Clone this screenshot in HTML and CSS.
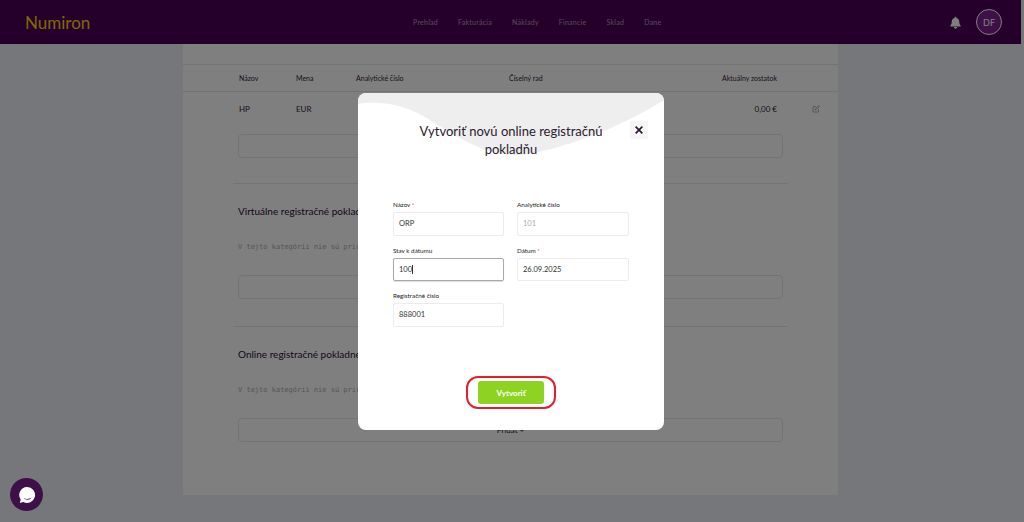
FILE: index.html
```html
<!DOCTYPE html>
<html lang="sk">
<head>
  <meta charset="UTF-8">
  <title>Numiron</title>
  <link rel="stylesheet" href="styles.css">
</head>
<body>
  <!-- Top bar -->
  <header class="topbar">
    <div class="logo">Numiron</div>
    <nav class="menu">
      <span>Prehľad</span>
      <span>Fakturácia</span>
      <span>Náklady</span>
      <span>Financie</span>
      <span>Sklad</span>
      <span>Dane</span>
    </nav>
    <div class="user">
      <svg class="bell" viewBox="0 0 24 24" width="13" height="13"><path d="M12 1.5c-1 0-1.7.8-1.7 1.7v.6C7 4.600 5 7.400 5 10.800c0 3.700-1 5.400-2.500 7v1.400h19v-1.400c-1.500-1.600-2.500-3.300-2.500-7 0-3.400-2-6.200-5.300-7v-.6c0-.9-.7-1.700-1.700-1.700zM9 20.500a3 3 0 0 0 6 0z"/></svg>
      <div class="avatar">DF</div>
    </div>
  </header>

  <!-- Page behind the dialog -->
  <main class="page">
    <div class="card">
      <section class="block block-first">
        <div class="row row-head">
          <span>Názov</span>
          <span>Mena</span>
          <span>Analytické číslo</span>
          <span>Číselný rad</span>
          <span class="amount">Aktuálny zostatok</span>
          <span></span>
        </div>
        <div class="row row-body">
          <span>HP</span>
          <span>EUR</span>
          <span></span>
          <span></span>
          <span class="amount">0,00 €</span>
          <svg class="edit" viewBox="0 0 16 16" width="8" height="8"><path d="M13 9v5H2V3h6M6 10l.6-2.500L13.500 1 15 2.500 8.500 9z"/></svg>
        </div>
        <div class="add-box"></div>
      </section>

      <section class="block">
        <h2>Virtuálne registračné pokladne</h2>
        <p class="empty">V tejto kategórii nie sú priradené</p>
        <div class="add-box"></div>
      </section>

      <section class="block">
        <h2>Online registračné pokladne</h2>
        <p class="empty">V tejto kategórii nie sú priradené</p>
        <div class="add-box">Pridať +</div>
      </section>
    </div>
  </main>

  <div class="overlay"></div>

  <!-- Dialog -->
  <div class="modal">
    <svg class="wave" viewBox="0 0 306 65" width="306" height="65"><path d="M0 11C20 8 45 10 72 27S130 64 162 62C200 58 262 35 306 7V0H0Z"/></svg>
    <button class="close">
      <svg viewBox="0 0 12 12" width="10" height="10"><path d="M2 2l8 8M10 2l-8 8"/></svg>
    </button>
    <h1>Vytvoriť novú online registračnú pokladňu</h1>
    <form class="form">
      <div class="field">
        <label>Názov <em>*</em></label>
        <div class="input">ORP</div>
      </div>
      <div class="field">
        <label>Analytické číslo</label>
        <div class="input input-off">101</div>
      </div>
      <div class="field">
        <label>Stav k dátumu</label>
        <div class="input input-focus">100<i class="caret"></i></div>
      </div>
      <div class="field">
        <label>Dátum <em>*</em></label>
        <div class="input">26.09.2025</div>
      </div>
      <div class="field">
        <label>Registračné číslo</label>
        <div class="input">888001</div>
      </div>
    </form>
    <div class="ring">
      <button class="submit">Vytvoriť</button>
    </div>
  </div>

  <!-- Chat widget -->
  <div class="chat">
    <svg viewBox="0 0 20 20" width="20" height="20"><path class="bubble" d="M10 2a8 8 0 1 1-3.600 15.100L2.800 18l.9-3.400A8 8 0 0 1 10 2z"/><path class="smile" d="M7 13c2 1.300 5 1.300 7.500-.5-1 2.700-6.500 3-7.500.5z"/></svg>
  </div>
</body>
</html>
```

FILE: styles.css
```css
/* Base */
* { margin: 0; padding: 0; box-sizing: border-box; }
html, body { height: 100%; }
body {
  font-family: Lato, "Noto Sans", sans-serif; background-color: #edeff6;
  color: #33203a; overflow: hidden; padding-right: 3px;
}

/* Top bar */
.topbar {
  display: flex; align-items: center;
  height: 44px; padding: 0 19px 0 25px;
  background-color: #4b0057;
}
.logo { width: 388px; font-size: 17px; color: #ffd010; }
.menu { display: flex; gap: 20px; font-size: 7px; color: #ffffff; opacity: 0.55; letter-spacing: 0.26px; }
.user { display: flex; align-items: center; gap: 14px; margin-left: auto; }
.bell { fill: #ffffff; }
.avatar {
  display: flex; align-items: center; justify-content: center;
  width: 26px; height: 26px; border-radius: 50%;
  border: 1px solid #ffffff; background-color: #7a2190;
  color: #ffffff; font-size: 9px;
}

/* Page */
.page { display: flex; justify-content: center; height: 451px; }
.card { width: 655px; background-color: #fff; padding: 20px 55px 0; }
.block { margin: 0 -5px; padding: 17px 5px 0; border-top: 1px solid #e6e6e6; height: 143px; }
.block-first { margin: 0 -55px; padding: 0 55px; height: 119px; }

.row {
  display: grid; grid-template-columns: 57px 60px 153px 150px 118px 61px;
  padding-left: 1px;
}
.row-head { align-items: center; height: 26px; font-size: 7px; }
.row-body {
  height: 43px; padding: 12px 0 0 56px; margin: 0 -55px; font-size: 8px;
  line-height: 10px; border-top: 1px solid #e6e6e6;
}
.amount { text-align: right; }
.edit { margin: 1px 0 0 35px; fill: none; stroke: #888; stroke-width: 1.300; }

h2 { font-size: 10px; font-weight: 400; color: #2a0a36; line-height: 20px; }
.empty {
  font-family: "DejaVu Sans Mono", monospace; font-size: 7px; color: #aaa;
  line-height: 12px; margin-top: 20px;
}
.add-box {
  display: flex; align-items: center; justify-content: center;
  height: 24px; border: 1px solid #e6e6e6; border-radius: 4px;
  font-size: 8px; margin-top: 22px;
}
.block-first .add-box { margin-top: 0; }

/* Dim layer */
.overlay { position: fixed; inset: 0; background-color: rgba(0, 0, 0, 0.5); }

/* Dialog */
.modal {
  position: fixed; left: 358px; top: 93px;
  display: flex; flex-direction: column; align-items: center;
  width: 306px; height: 337px; padding-top: 29px;
  background-color: #fff; border-radius: 8px; overflow: hidden;
}
.wave { position: absolute; left: 0; top: 0; fill: #eeeeee; }
.close {
  position: absolute; top: 28px; right: 16px;
  display: flex; align-items: center; justify-content: center;
  width: 18px; height: 18px; border: none; background-color: #f6f6f6;
}
.close path { fill: none; stroke: #2a1530; stroke-width: 2; }
.modal h1 {
  position: relative; width: 200px;
  font-size: 13px; font-weight: 400; line-height: 18px; text-align: center; color: #2b2030;
}

.form {
  display: grid; grid-template-columns: 111px 112px; column-gap: 13px; row-gap: 11px;
  margin-top: 43px; width: 236px;
}
.field label { display: block; font-size: 6.300px; line-height: 8px; margin-bottom: 3px; color: #222; }
.field em { color: #e5484d; font-style: normal; }
.input {
  display: flex; align-items: center;
  height: 23.500px; padding: 0 5px; border: 1px solid #ececec; border-radius: 2px;
  font-size: 7.500px; color: #333;
}
.input-off { color: #aaa; }
.input-focus { border-color: #a8a8a8; box-shadow: 0 1px 1px #ddd; }
.caret { width: 1px; height: 9px; background-color: #333; }

.ring {
  display: flex; align-items: center; justify-content: center;
  width: 90px; height: 33px; margin-top: 49.500px;
  border: 2.500px solid #e0202f; border-radius: 12px;
}
.submit {
  width: 66px; height: 23px; border: none; border-radius: 3px;
  background-color: #8ed321; color: #fff; font-family: inherit; font-size: 8px; font-weight: 700;
}

/* Chat widget */
.chat {
  position: fixed; left: 10px; bottom: 11px;
  display: flex; align-items: center; justify-content: center;
  width: 33px; height: 33px; border-radius: 50%;
  background-color: #3d1048;
}
.bubble { fill: #fff; }
.smile { fill: #3d1048; }
```
